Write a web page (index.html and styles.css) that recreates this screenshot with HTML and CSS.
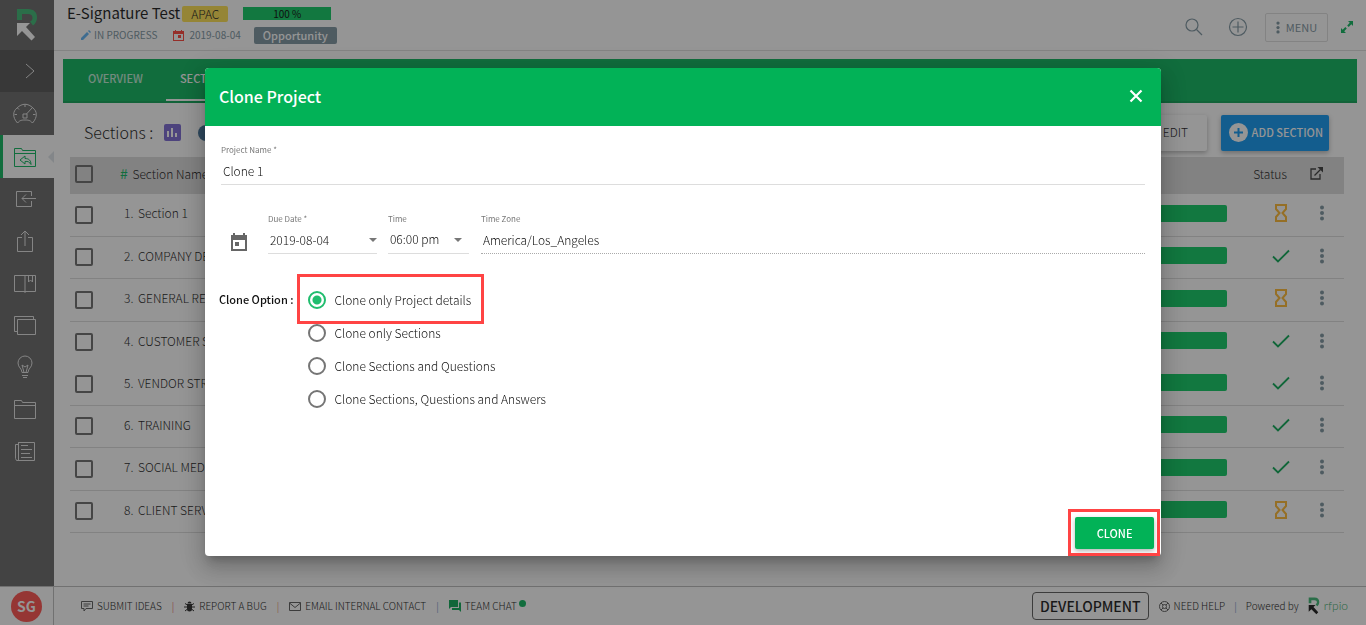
FILE: index.html
```html
<!DOCTYPE html>
<html lang="en">
<head>
  <meta charset="UTF-8">
  <meta name="viewport" content="width=device-width, initial-scale=1.0">
  <title>E-Signature Test - Clone Project</title>
  <link rel="stylesheet" href="styles.css">
</head>
<body>
  <!-- shared icons -->
  <svg class="icon-defs" aria-hidden="true">
    <symbol id="check" viewBox="0 0 18 14"><path d="M1 7.500l5 5L17 1.500" fill="none" stroke="currentColor" stroke-width="1.800"/></symbol>
    <symbol id="hourglass" viewBox="0 0 12 18"><path d="M1 1h10v4L7.500 9 11 13v4H1v-4L4.500 9 1 5z" fill="none" stroke="currentColor" stroke-width="2"/></symbol>
    <symbol id="dots" viewBox="0 0 4 16"><circle cx="2" cy="2.500" r="2"/><circle cx="2" cy="8" r="2"/><circle cx="2" cy="13.500" r="2"/></symbol>
    <symbol id="logo" viewBox="0 0 22 34"><path class="logo-r" d="M1 1h11c6 0 9 3.500 9 8.500 0 3.500-1.500 6-4 8l-3-4c1.500-.5 2.500-1.500 2.500-3.500C16.500 7.500 15 6 12 6H6v6H1z"/><path class="logo-arrow" d="M1 15h13l-4 4 9 10-3.500 3.500L6 23l-5 5z"/></symbol>
  </svg>

  <div class="app">
    <div class="workspace">
      <nav class="sidebar">
        <a href="#" class="brand" aria-label="Home"><svg width="22" height="34"><use href="#logo"/></svg></a>
        <button class="expand" aria-label="Expand menu"><svg width="12" height="18" viewBox="0 0 12 18"><path d="M2 2l8 7-8 7"/></svg></button>
        <div class="nav-items">
          <a href="#" aria-label="Dashboard"><svg width="24" height="22" viewBox="0 0 24 22"><path d="M4.500 20C-1 14 0 8 4 5c5-5 11-5 16 0 4 3 5 9-.5 15-2.500-3-4.500-3-7.500-3s-5 0-7.500 3zM12 1.500V4M4.500 5l1.500 1.500M1.500 11.500H4M20 11.500h2.500M13.500 11L19 5"/><path d="M10 11h4v4h-4z"/></svg></a>
          <a href="#" class="current" aria-label="Projects"><svg width="24" height="22" viewBox="0 0 24 22"><path d="M1.500 20.500v-18h7l1 2h13v16zM1.500 7.500h21M12 10l-5 4 5 4v-2.500c3-.5 4.500.5 6 3 0-4-2-6-6-6z"/></svg></a>
          <a href="#" aria-label="Import"><svg width="24" height="22" viewBox="0 0 24 22"><path d="M18.500 8V3.500h-15v15h15V13M23 10.500H9M13 6.500l-4 4 4 4"/></svg></a>
          <a href="#" aria-label="Export"><svg width="24" height="24" viewBox="0 0 24 24"><path d="M9 8.500H4.500v14h15v-14H15M12 17V2M8 6l4-4 4 4"/></svg></a>
          <a href="#" aria-label="Content library"><svg width="24" height="22" viewBox="0 0 24 22"><path d="M1.500 3.500h21v16h-21zM12 3.500V21M15.500 3.500V10l2-2 2 2V3.500"/></svg></a>
          <a href="#" aria-label="Templates"><svg width="24" height="22" viewBox="0 0 24 22"><path d="M4.500 5.500h18v15h-18zM4.500 17.500h-3v-15h19v3"/></svg></a>
          <a href="#" aria-label="Ideas"><svg width="18" height="24" viewBox="0 0 18 24"><path d="M6 17.500c0-4-4-5-4-9.500a7 7 0 0 1 14 0c0 4.500-4 5.500-4 9.500zM8 17.500L6 10l3 2 3-2-2 7.500M6 20.500h6M7 22.500h4"/></svg></a>
          <a href="#" aria-label="Documents"><svg width="24" height="22" viewBox="0 0 24 22"><path d="M1.500 20.500v-18h7l1 2h13v16zM1.500 7.500h21"/></svg></a>
          <a href="#" aria-label="Reports"><svg width="22" height="22" viewBox="0 0 22 22"><path d="M4.500 2.500h16v18h-18l-1-2v-14h3zM4.500 2.500v18M7 5.500h7M7 9.500h11M7 13.500h9M7 17.500h11"/></svg></a>
        </div>
      </nav>

      <div class="main">
        <header class="topbar">
          <div class="project">
            <div class="line">
              <h1>E-Signature Test</h1>
              <span class="badge region">APAC</span>
              <span class="progress-total">100 %</span>
            </div>
            <div class="line meta">
              <svg width="10" height="10" viewBox="0 0 10 10"><path d="M0 8l6-6 2 2-6 6H0zM7 1l1-1 2 2-1 1z" fill="#58b0f5"/></svg>
              <span class="state">IN PROGRESS</span>
              <svg width="11" height="11" viewBox="0 0 11 11"><path d="M0 1h2V0h1v1h5V0h1v1h2v10H0zM1 4v6h9V4zM5 5h3v3H5z" fill="#ff3b30" fill-rule="evenodd"/></svg>
              <span class="date">2019-08-04</span>
              <span class="badge stage">Opportunity</span>
            </div>
          </div>
          <div class="tools">
            <button aria-label="Search"><svg width="18" height="18" viewBox="0 0 18 18"><circle cx="7" cy="7" r="6"/><path d="M11.500 11.500l5.500 5.500"/></svg></button>
            <button aria-label="Add"><svg width="20" height="20" viewBox="0 0 20 20"><circle cx="10" cy="10" r="8.500"/><path d="M10 4.500v11M4.500 10h11"/></svg></button>
            <button class="menu"><svg class="dots" width="4" height="13"><use href="#dots"/></svg>MENU</button>
            <button aria-label="Full screen"><svg class="fullscreen" width="12" height="12" viewBox="0 0 12 12"><path d="M7 0h5v5l-1.700-1.700-2.600 2.600-1.500-1.500 2.600-2.600zM5 12H0V7l1.700 1.700 2.600-2.600 1.500 1.500-2.600 2.600z"/></svg></button>
          </div>
        </header>

        <nav class="tabs">
          <a href="#">OVERVIEW</a>
          <a href="#" class="selected">SECTIONS</a>
        </nav>

        <div class="toolbar">
          <h2>Sections :</h2>
          <svg width="17" height="17" viewBox="0 0 17 17"><rect width="17" height="17" rx="2" fill="#7563d2"/><path d="M3 7h2v6H3zM7 4h2v9H7zM11 9h2v4h-2z" fill="#fff"/></svg>
          <span class="info-dot"></span>
          <button class="edit">EDIT</button>
          <button class="add"><svg width="19" height="19" viewBox="0 0 19 19"><circle cx="9.500" cy="9.500" r="9.500" fill="#fff"/><path d="M9.500 5v9M5 9.500h9" stroke="#0694f2" stroke-width="2"/></svg>ADD SECTION</button>
        </div>

        <table class="sections">
          <thead>
            <tr>
              <th class="pick"><input type="checkbox" aria-label="Select all"></th>
              <th class="name"><b>#</b> Section Name</th>
              <th></th>
              <th class="status">Status</th>
              <th class="more"><svg width="14" height="13" viewBox="0 0 14 13"><path d="M7 2H2v10h9V7M5.500 8.500l6-6" fill="none" stroke="#333" stroke-width="1.300"/><path d="M8.500 0H14v5.500z" fill="#333"/></svg></th>
            </tr>
          </thead>
          <tbody>
            <tr>
              <td><input type="checkbox" aria-label="Select section 1"></td>
              <td><span class="num">1.</span>Section 1</td>
              <td><div class="bar"></div></td>
              <td class="status"><svg class="pending" width="12" height="18"><use href="#hourglass"/></svg></td>
              <td class="more"><svg class="dots" width="4" height="16"><use href="#dots"/></svg></td>
            </tr>
            <tr>
              <td><input type="checkbox" aria-label="Select section 2"></td>
              <td><span class="num">2.</span>COMPANY DETAILS</td>
              <td><div class="bar"></div></td>
              <td class="status"><svg class="done" width="18" height="14"><use href="#check"/></svg></td>
              <td class="more"><svg class="dots" width="4" height="16"><use href="#dots"/></svg></td>
            </tr>
            <tr>
              <td><input type="checkbox" aria-label="Select section 3"></td>
              <td><span class="num">3.</span>GENERAL REQUIREMENTS</td>
              <td><div class="bar"></div></td>
              <td class="status"><svg class="pending" width="12" height="18"><use href="#hourglass"/></svg></td>
              <td class="more"><svg class="dots" width="4" height="16"><use href="#dots"/></svg></td>
            </tr>
            <tr class="open">
              <td><input type="checkbox" aria-label="Select section 4"></td>
              <td><span class="num">4.</span>CUSTOMER SUPPORT</td>
              <td><div class="bar"></div></td>
              <td class="status"><svg class="done" width="18" height="14"><use href="#check"/></svg></td>
              <td class="more"><svg class="dots" width="4" height="16"><use href="#dots"/></svg></td>
            </tr>
            <tr>
              <td><input type="checkbox" aria-label="Select section 5"></td>
              <td><span class="num">5.</span>VENDOR STRATEGY</td>
              <td><div class="bar"></div></td>
              <td class="status"><svg class="done" width="18" height="14"><use href="#check"/></svg></td>
              <td class="more"><svg class="dots" width="4" height="16"><use href="#dots"/></svg></td>
            </tr>
            <tr>
              <td><input type="checkbox" aria-label="Select section 6"></td>
              <td><span class="num">6.</span>TRAINING</td>
              <td><div class="bar"></div></td>
              <td class="status"><svg class="done" width="18" height="14"><use href="#check"/></svg></td>
              <td class="more"><svg class="dots" width="4" height="16"><use href="#dots"/></svg></td>
            </tr>
            <tr>
              <td><input type="checkbox" aria-label="Select section 7"></td>
              <td><span class="num">7.</span>SOCIAL MEDIA</td>
              <td><div class="bar"></div></td>
              <td class="status"><svg class="done" width="18" height="14"><use href="#check"/></svg></td>
              <td class="more"><svg class="dots" width="4" height="16"><use href="#dots"/></svg></td>
            </tr>
            <tr>
              <td><input type="checkbox" aria-label="Select section 8"></td>
              <td><span class="num">8.</span>CLIENT SERVICES</td>
              <td><div class="bar"></div></td>
              <td class="status"><svg class="pending" width="12" height="18"><use href="#hourglass"/></svg></td>
              <td class="more"><svg class="dots" width="4" height="16"><use href="#dots"/></svg></td>
            </tr>
          </tbody>
        </table>
      </div>
    </div>

    <footer class="footer">
      <div class="user"><span class="avatar">SG</span></div>
      <div class="links">
        <a href="#"><svg width="12" height="11" viewBox="0 0 12 11"><path d="M.5.500h11v7H5l-2 2.500V7.500H.5zM2.500 3h7M2.500 5h5" fill="none" stroke="#555"/></svg>SUBMIT IDEAS</a>
        <span class="sep red">|</span>
        <a href="#"><svg width="11" height="11" viewBox="0 0 11 11"><path d="M3.500 2.500a2 2 0 0 1 4 0zM3 3h5v5a2.500 2.500 0 0 1-5 0z" fill="#222"/><path d="M0 6h11M1 2.500L3.500 4M10 2.500L7.500 4M1 10l2.500-2M10 10L7.500 8" stroke="#222"/></svg>REPORT A BUG</a>
        <span class="sep orange">|</span>
        <a href="#"><svg width="12" height="9" viewBox="0 0 12 9"><path d="M.5.500h11v8H.5zM.5 1L6 5.500 11.500 1" fill="none" stroke="#555"/></svg>EMAIL INTERNAL CONTACT</a>
        <span class="sep blue">|</span>
        <a href="#"><svg width="12" height="12" viewBox="0 0 12 12"><path d="M0 0h9v7H2L0 9zM10 2.500h2V12l-2-2H3V8h7z" fill="#02a64f"/></svg>TEAM CHAT<i class="online"></i></a>
      </div>
      <div class="about">
        <span class="env">DEVELOPMENT</span>
        <a href="#"><svg width="11" height="11" viewBox="0 0 11 11" fill="none" stroke="#555"><circle cx="5.500" cy="5.500" r="5"/><circle cx="5.500" cy="5.500" r="2"/><path d="M2 2l2 2M9 2L7 4M2 9l2-2M9 9L7 7"/></svg>NEED HELP</a>
        <span class="sep blue">|</span>
        <span class="powered">Powered by</span>
        <svg class="small-logo" width="12" height="18"><use href="#logo"/></svg>
        <span class="company">rfpio</span>
      </div>
    </footer>
  </div>

  <div class="backdrop">
    <form class="dialog" role="dialog" aria-labelledby="dialogTitle">
      <div class="dialog-header">
        <h2 id="dialogTitle">Clone Project</h2>
        <button type="button" class="close" aria-label="Close"><svg width="14" height="14" viewBox="0 0 14 14"><path d="M1.500 1.500l11 11M12.500 1.500l-11 11" stroke="#fff" stroke-width="2.200"/></svg></button>
      </div>

      <div class="dialog-body">
        <div class="field">
          <label for="projectName">Project Name *</label>
          <input type="text" id="projectName" value="Clone 1">
        </div>

        <div class="schedule">
          <svg width="18" height="18" viewBox="0 0 18 18"><path d="M1 2h2V0h2v2h8V0h2v2h2v16H1zM3 7v9h12V7zM5 9h4v4H5z" fill="#666" fill-rule="evenodd"/></svg>
          <div class="field due caret">
            <label for="dueDate">Due Date *</label>
            <input type="text" id="dueDate" value="2019-08-04">
          </div>
          <div class="field time caret">
            <label for="dueTime">Time</label>
            <select id="dueTime"><option>06:00 pm</option></select>
          </div>
          <div class="field zone">
            <label for="timeZone">Time Zone</label>
            <input type="text" id="timeZone" value="America/Los_Angeles" readonly>
          </div>
        </div>

        <div class="options">
          <span class="options-title">Clone Option :</span>
          <div class="choices">
            <label class="marked"><input type="radio" name="clone" checked>Clone only Project details</label>
            <label><input type="radio" name="clone">Clone only Sections</label>
            <label><input type="radio" name="clone">Clone Sections and Questions</label>
            <label><input type="radio" name="clone">Clone Sections, Questions and Answers</label>
          </div>
        </div>
      </div>

      <div class="dialog-actions">
        <div class="marked"><button type="button" class="clone">CLONE</button></div>
      </div>
    </form>
  </div>
</body>
</html>
```
FILE: styles.css
```css
* {
  box-sizing: border-box;
}
body {
  margin: 0;
  font-family: 'Noto Sans CJK SC', 'Noto Sans', sans-serif;
  font-size: 12px;
  font-weight: 300;
  line-height: 16px;
  color: #111;
  background: #fff;
}
h1, h2 {
  margin: 0;
  font-weight: 300;
}
a {
  color: inherit;
  text-decoration: none;
}
button, input, select {
  font: inherit;
  color: inherit;
  margin: 0;
  padding: 0;
  border: none;
  background: none;
}
svg {
  flex: none;
}
.icon-defs {
  position: absolute;
  width: 0;
  height: 0;
}
.app {
  display: flex;
  flex-direction: column;
  height: 100vh;
  overflow: hidden;
}
.workspace {
  display: flex;
  flex: 1;
  min-height: 0;
}

/* sidebar */
.sidebar {
  width: 54px;
  flex: none;
  background: #626262;
}
.brand, .expand {
  display: flex;
  align-items: center;
  justify-content: center;
  width: 100%;
}
.brand {
  height: 50px;
  color: #fff;
}
.logo-r {
  fill: #35b56d;
}
.logo-arrow {
  fill: currentColor;
}
.expand {
  height: 42px;
  background: #4d4d4d;
  padding-left: 5px;
}
.sidebar svg {
  fill: none;
  stroke: #e0e0e0;
  stroke-width: 1;
}
.sidebar .brand svg {
  stroke: none;
}
.nav-items {
  padding-top: 1px;
}
.nav-items a {
  display: flex;
  align-items: center;
  justify-content: center;
  height: 42px;
  padding-right: 4px;
}
.nav-items .current {
  position: relative;
  height: 43px;
  padding-right: 7px;
  background: #fff;
  border-left: 3px solid #02b257;
}
.nav-items .current::after {
  content: "";
  position: absolute;
  right: 0;
  border: 6px solid transparent;
  border-left: none;
  border-right-color: #dde3e8;
}
.nav-items .current svg {
  stroke: #02b257;
}

/* top bar */
.main {
  flex: 1;
  min-width: 0;
}
.topbar {
  display: flex;
  justify-content: space-between;
  height: 51px;
  padding: 4px 13px 0 13px;
  border-bottom: 1px solid #ddd;
}
.line {
  display: flex;
  align-items: center;
  height: 19px;
}
.topbar h1 {
  font-size: 15px;
  font-weight: 400;
  line-height: 16px;
  padding-bottom: 2px;
}
.badge {
  border-radius: 2px;
  text-align: center;
}
.region {
  width: 46px;
  margin: 0 15px 0 2px;
  background: #ffe04a;
}
.progress-total {
  width: 88px;
  background: #04c85c;
  color: #000;
  font-size: 10px;
  font-weight: 400;
  line-height: 13px;
  text-align: center;
}
.meta {
  height: 25px;
  padding: 0 0 1px 14px;
  color: #78909c;
  font-size: 10px;
  font-weight: 400;
}
.state {
  margin: 0 16px 0 3px;
}
.date {
  margin: 0 13px 0 5px;
}
.stage {
  width: 83px;
  background: #78909c;
  color: #fff;
  font-size: 11px;
  font-weight: 500;
  line-height: 17px;
}
.tools {
  display: flex;
  align-items: center;
  color: #78909c;
}
.tools svg {
  display: block;
  fill: none;
  stroke: #78909c;
  stroke-width: 1.2;
}
.tools button {
  margin-left: 25px;
}
.tools .menu {
  display: flex;
  align-items: center;
  justify-content: center;
  gap: 6px;
  width: 63px;
  height: 29px;
  margin-left: 17px;
  border: 1px solid #ddd;
  border-radius: 2px;
  font-size: 11px;
  font-weight: 400;
}
.tools .menu + button {
  margin-left: 13px;
}
.dots, .tools .dots {
  fill: #78909c;
  stroke: none;
}
.tools .fullscreen {
  fill: #02b257;
  stroke: none;
}

/* page */
.tabs {
  display: flex;
  gap: 9px;
  height: 44px;
  margin: 8px 9px 0;
  padding-left: 11px;
  background: #02b257;
  border-bottom: 2px solid #04a04f;
  color: #fff;
  font-weight: 500;
}
.tabs a {
  padding: 11px 14px;
  font-size: 11px;
  opacity: .75;
}
.tabs .selected {
  border-bottom: 2px solid #fff;
  opacity: 1;
}
.toolbar {
  display: flex;
  align-items: center;
  height: 54px;
  padding: 5px 37px 0 30px;
}
.toolbar h2 {
  margin-right: 11px;
  padding-bottom: 2px;
  font-size: 16px;
}
.info-dot {
  width: 16px;
  height: 16px;
  margin: 0 auto 0 17px;
  border-radius: 50%;
  background: #3c6e96;
}
.toolbar button {
  display: flex;
  align-items: center;
  justify-content: flex-end;
  height: 36px;
  padding-bottom: 1px;
  border-radius: 2px;
  box-shadow: 0 2px 5px rgba(0,0,0,0.3);
}
.toolbar .edit {
  width: 80px;
  padding-right: 19px;
}
.toolbar .add {
  gap: 4px;
  width: 108px;
  margin-left: 14px;
  padding-right: 6px;
  background: #0694f2;
  color: #fff;
  font-size: 11px;
  font-weight: 500;
}
.sections {
  width: calc(100% - 38px);
  margin-left: 16px;
  border-collapse: collapse;
  table-layout: fixed;
}
.sections th {
  height: 37px;
  padding: 0 0 4px;
  background: #dbdbdb;
  font-weight: 300;
  text-align: left;
}
.sections td {
  height: 42px;
  padding: 0 0 3px;
  border-bottom: 1px solid #dbdbdb;
}
.sections tr:nth-child(4n+3) td {
  height: 43px;
}
.sections .open td {
  border-bottom-color: transparent;
}
.sections .pick {
  width: 50px;
}
.sections .name {
  width: 450px;
}
.sections b {
  margin-right: 2px;
  color: #02b257;
  font-size: 14px;
}
.num {
  display: inline-block;
  width: 14px;
  margin-left: 4px;
}
.sections .status {
  width: 80px;
  padding-left: 28px;
  text-align: center;
}
.sections th.status {
  padding: 0 20px 4px 26px;
}
.sections .more {
  width: 37px;
  padding-left: 2px;
}
.sections td.more {
  padding-left: 13px;
}
.sections svg {
  display: block;
}
.sections td.status svg {
  margin: 0 auto;
}
.sections input {
  appearance: none;
  display: block;
  width: 18px;
  height: 18px;
  margin-left: 5px;
  border: 2px solid #666;
  border-radius: 2px;
}
.sections td input {
  margin-top: 3px;
}
.bar {
  height: 17px;
  background: #04c85c;
  border-radius: 2px;
}
.pending {
  color: #ffb72b;
}
.done {
  color: #02a64f;
}

/* footer */
.footer {
  display: flex;
  height: 39px;
  border-top: 1px solid #bbb;
  font-size: 10px;
}
.user {
  display: flex;
  align-items: center;
  justify-content: center;
  width: 54px;
  border-right: 1px solid #bbb;
}
.avatar {
  width: 31px;
  border-radius: 50%;
  background: #ff4945;
  color: #fff;
  font-size: 14px;
  font-weight: bold;
  line-height: 31px;
  text-align: center;
}
.links, .about, .footer a {
  display: flex;
  align-items: center;
}
.links {
  flex: 1;
  padding-left: 27px;
}
.footer a {
  gap: 4px;
}
.sep {
  margin: 0 10px;
}
.red {
  color: #e53935;
}
.orange {
  color: #e8713c;
}
.blue {
  color: #3f6fb5;
}
.online {
  width: 7px;
  height: 7px;
  margin: -6px 0 0 -2px;
  border-radius: 50%;
  background: #02b257;
}
.about {
  padding-right: 18px;
}
.about .sep {
  margin: 0 9px;
}
.env {
  margin-right: 10px;
  padding: 0 7px;
  border: 1px solid #555;
  border-radius: 4px;
  font-size: 14px;
  font-weight: 500;
  line-height: 26px;
}
.small-logo {
  margin: 0 4px 0 9px;
}
.company {
  color: #35a866;
  font-family: Lato, sans-serif;
  font-size: 12px;
}

/* dialog */
.backdrop {
  position: fixed;
  inset: 0;
  display: flex;
  align-items: center;
  justify-content: center;
  padding-bottom: 1px;
  background: rgba(33,33,33,0.48);
}
.dialog {
  display: flex;
  flex-direction: column;
  width: 70%;
  min-height: 78vh;
  border-radius: 4px;
  background: #fff;
  box-shadow: 0 7px 8px -4px rgba(0,0,0,0.2), 0 13px 19px 2px rgba(0,0,0,0.14), 0 5px 24px 4px rgba(0,0,0,0.12);
}
.dialog-header {
  display: flex;
  align-items: center;
  justify-content: space-between;
  height: 58px;
  padding: 0 18px 2px 14px;
  border-radius: 4px 4px 0 0;
  background: #02b257;
  color: #fff;
}
.dialog-header h2 {
  font-size: 16px;
  font-weight: 500;
}
.close svg {
  display: block;
}
.dialog-body {
  flex: 1;
  padding: 16px 16px 0;
}
.field {
  position: relative;
  border-bottom: 1px solid #ddd;
}
.field label {
  display: block;
  color: #777;
  font-size: 8px;
  font-weight: 400;
}
.field input, .field select {
  display: block;
  appearance: none;
  width: 100%;
  height: 26px;
  padding: 0 0 2px 2px;
}
.schedule {
  display: flex;
  align-items: flex-end;
  margin-top: 26px;
  padding-left: 9px;
}
.schedule svg {
  margin: 0 20px 3px 0;
}
.due {
  width: 109px;
}
.time {
  width: 81px;
  margin: 0 12px 0 11px;
}
.zone {
  flex: 1;
  border-bottom: 1px dotted #aaa;
}
.caret::after {
  content: "";
  position: absolute;
  right: 0;
  bottom: 11px;
  border: 4px solid transparent;
  border-top-color: #777;
  border-bottom: none;
}
.time::after {
  right: 7px;
}
.options {
  display: flex;
  gap: 14px;
  margin: 29px 0 0 -2px;
}
.options-title {
  line-height: 33px;
  font-size: 11px;
  font-weight: 500;
}
.choices label {
  display: flex;
  align-items: center;
  gap: 9px;
  width: max-content;
  height: 33px;
}
.choices input {
  appearance: none;
  width: 18px;
  height: 18px;
  border: 2px solid #757575;
  border-radius: 50%;
}
.choices input:checked {
  border-color: #20bd6e;
  background: radial-gradient(circle, #20bd6e 4px, transparent 5px);
}
/* red highlight boxes */
.marked {
  position: relative;
}
.marked::after {
  content: "";
  position: absolute;
  inset: -9px -13px -8px -11px;
  border: 3px solid #ff4444;
  pointer-events: none;
}
.dialog-actions {
  display: flex;
  justify-content: flex-end;
  padding: 0 7px 7px;
}
.dialog-actions .marked::after {
  inset: -8px -6px -7px -7px;
}
.clone {
  display: block;
  width: 79px;
  height: 32px;
  border-radius: 2px;
  background: #02b257;
  box-shadow: 0 2px 5px rgba(0,0,0,0.3);
  color: #fff;
  font-size: 11px;
  font-weight: 500;
}
```
